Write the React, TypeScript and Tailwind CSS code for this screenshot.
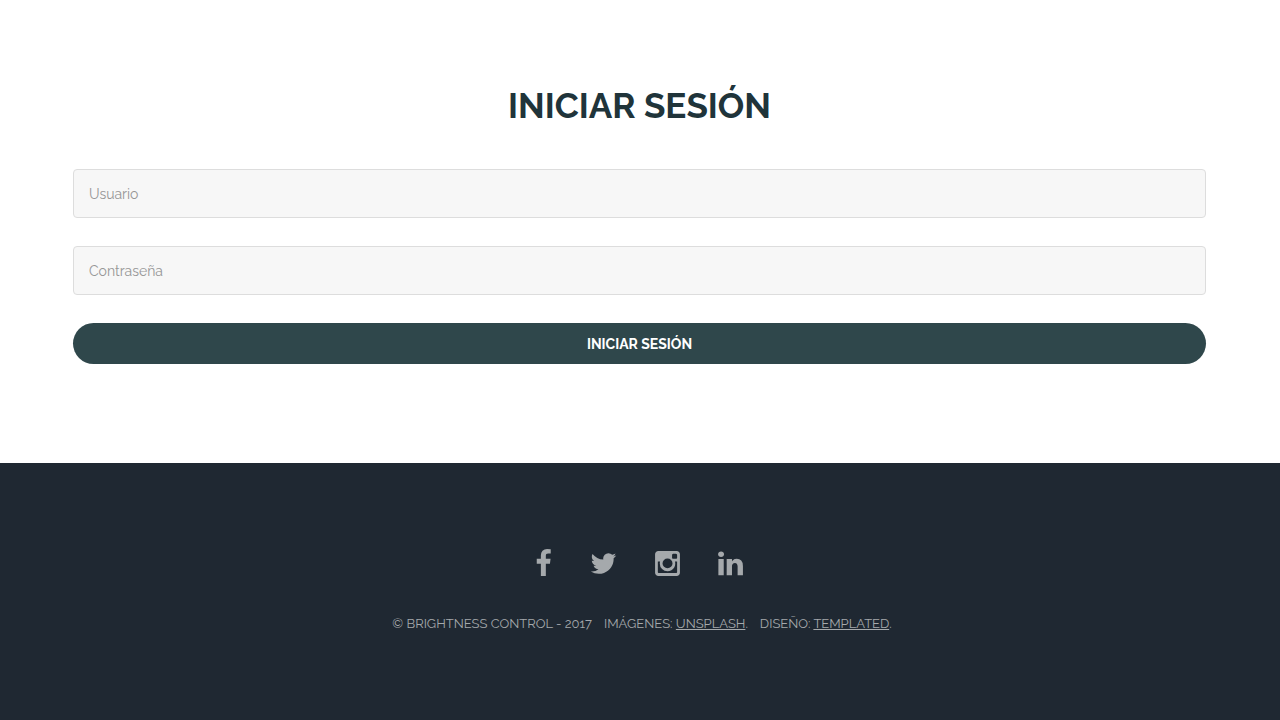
const socialLinks = [
  {
    name: "Facebook",
    viewBox: "384 0 1024 1792",
    className: "h-[29px] w-[17px]",
    path: "M1343 12v264h-157q-86 0-116 36t-30 108v189h293l-39 296h-254v759h-306v-759h-255v-296h255v-218q0-186 104-288.5t277-102.5q147 0 228 12z",
  },
  {
    name: "Twitter",
    viewBox: "64 0 1664 1792",
    className: "h-[29px] w-[27px]",
    path: "M1684 408q-67 98-162 167 1 14 1 42 0 130-38 259.5t-115.5 248.5-184.5 210.5-258 146-323 54.5q-271 0-496-145 35 4 78 4 225 0 401-138-105-2-188-64.5t-114-159.5q33 5 61 5 43 0 85-11-112-23-185.5-111.5t-73.5-205.5v-4q68 38 146 41-66-44-105-115t-39-154q0-88 44-163 121 149 294.5 238.5t371.5 99.5q-8-38-8-74 0-134 94.5-228.5t228.5-94.5q140 0 236 102 109-21 205-78-37 115-142 178 93-10 186-50z",
  },
  {
    name: "Instagram",
    viewBox: "128 0 1536 1792",
    className: "h-[29px] w-[25px]",
    path: "M1490 1426v-648h-135q20 63 20 131 0 126-64 232.5t-174 168.5-240 62q-197 0-337-135.5t-140-327.5q0-68 20-131h-141v648q0 26 17.5 43.5t43.5 17.5h1069q25 0 43-17.5t18-43.5zm-284-533q0-124-90.5-211.5t-218.5-87.5q-127 0-217.5 87.5t-90.5 211.5 90.5 211.5 217.5 87.5q128 0 218.5-87.5t90.5-211.5zm284-360v-165q0-28-20-48.5t-49-20.5h-174q-29 0-49 20.5t-20 48.5v165q0 29 20 49t49 20h174q29 0 49-20t20-49zm174-208v1142q0 81-58 139t-139 58h-1142q-81 0-139-58t-58-139v-1142q0-81 58-139t139-58h1142q81 0 139 58t58 139z",
  },
  {
    name: "LinkedIn",
    viewBox: "128 0 1536 1792",
    className: "h-[29px] w-[25px]",
    path: "M477 625v991h-330v-991h330zm21-306q1 73-50.5 122t-135.5 49h-2q-82 0-132-49t-50-122q0-74 51.5-122.5t134.5-48.5 133 48.5 51 122.5zm1166 729v568h-329v-530q0-105-40.5-164.5t-126.5-59.5q-63 0-105.5 34.5t-63.5 85.5q-11 30-11 81v553h-329q2-399 2-647t-1-296l-1-48h329v144h-2q20-32 41-56t56.5-52 87-43.5 114.5-15.5q171 0 275 113.5t104 332.5z",
  },
];

function Field({ label, type, name }: { label: string; type: string; name: string }) {
  return (
    <input
      type={type}
      name={name}
      aria-label={label}
      placeholder={label}
      className="h-[49px] w-full rounded-[4px] border border-[#dddddd] bg-[#f7f7f7] px-[15px] text-[14px] text-[#444444] placeholder:text-[#969696]"
    />
  );
}

export default function App() {
  return (
    <div className="flex min-h-screen flex-col bg-white font-['Raleway','Lato',sans-serif]">
      <main className="pr-[74px] pb-[99px] pl-[73px] pt-20">
        <h1 className="text-center text-[35px] leading-[52px] font-bold text-[#20343a] uppercase">
          Iniciar sesión
        </h1>
        <form className="mt-[37px] flex flex-col gap-7" onSubmit={(e) => e.preventDefault()}>
          <Field label="Usuario" type="text" name="usuario" />
          <Field label="Contraseña" type="password" name="clave" />
          <button
            type="submit"
            className="h-[41px] w-full rounded-full bg-[#2f474b] pt-0.5 text-[14px] font-bold text-white uppercase"
          >
            Iniciar sesión
          </button>
        </form>
      </main>
      <footer className="flex grow flex-col items-center bg-[#1f2832] pt-[86px] text-[#a5a9ac]">
        <ul className="flex items-center gap-[38px] pr-0.5">
          {socialLinks.map((item) => (
            <li key={item.name}>
              <a href="#" aria-label={item.name} className="block">
                <svg viewBox={item.viewBox} className={item.className} fill="currentColor" aria-hidden="true">
                  <path d={item.path} />
                </svg>
              </a>
            </li>
          ))}
        </ul>
        <div className="mt-9 flex gap-3 pl-1 text-[13px] leading-5 uppercase">
          <span>© Brightness Control - 2017</span>
          <span>
            Imágenes: <a href="#" className="underline">Unsplash</a>.
          </span>
          <span>
            Diseño: <a href="#" className="underline">Templated</a>.
          </span>
        </div>
      </footer>
    </div>
  );
}
